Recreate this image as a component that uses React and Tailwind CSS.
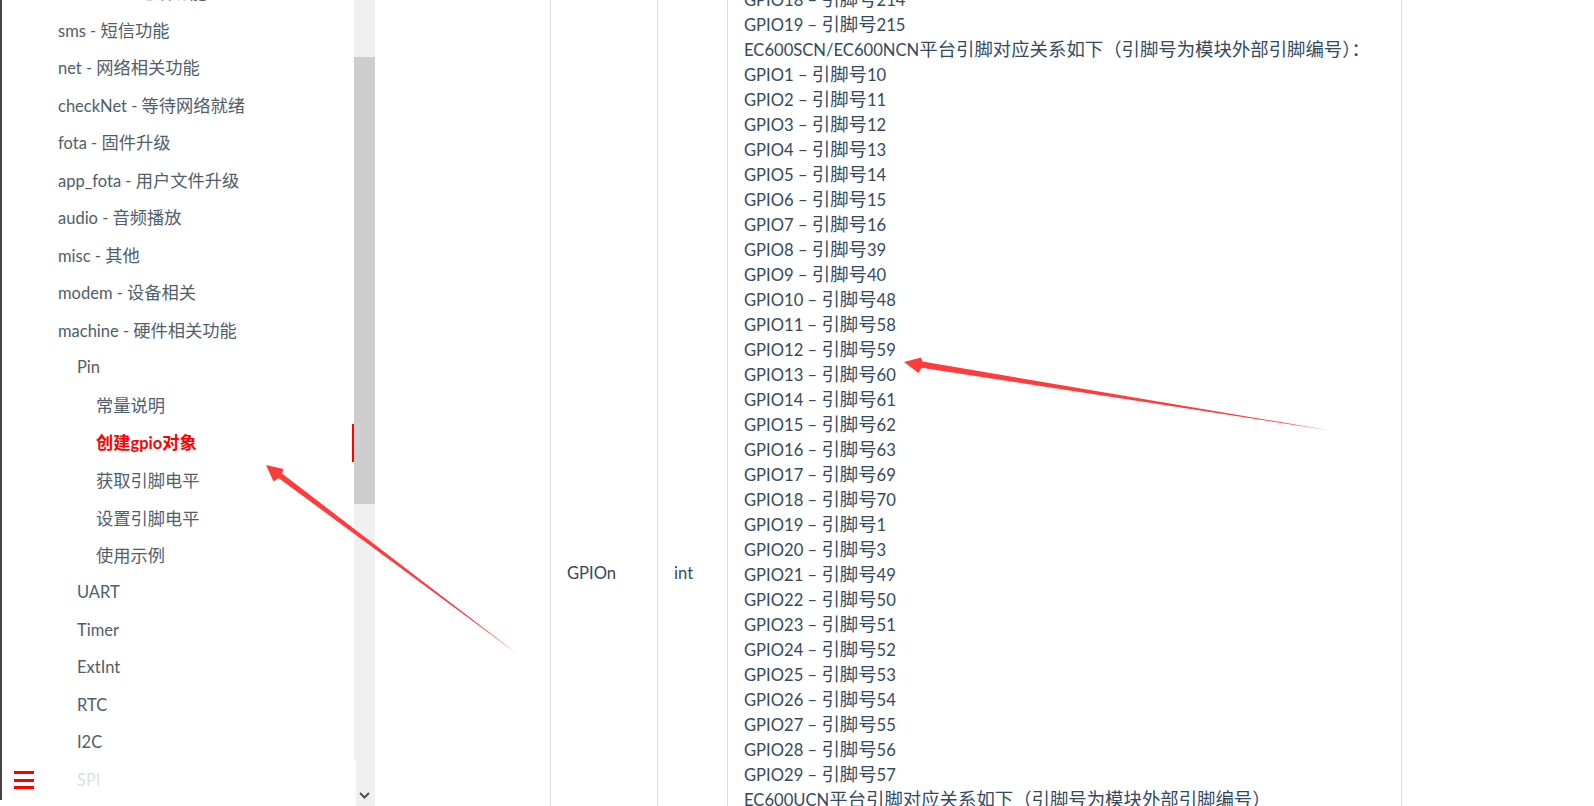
import React from "react";

const CJK_RE = /([\u2E80-\u9FFF\uFF00-\uFFEF\u3000-\u303F]+)/;
const CJK_TEST = /[\u2E80-\u9FFF\uFF00-\uFFEF\u3000-\u303F]/;

function Mixed({ text, latin, cjk }) {
  const parts = text.split(CJK_RE);
  return (
    <span className="whitespace-pre">
      {parts.map((p, i) =>
        p === "" ? null : CJK_TEST.test(p) ? (
          <span key={i} className={cjk}>
            {p}
          </span>
        ) : (
          <span key={i} className={latin}>
            {p}
          </span>
        )
      )}
    </span>
  );
}

const SIDE_LATIN = "font-['Lato','Noto_Sans_CJK_SC',sans-serif] text-[16.5px]";
const SIDE_CJK = "font-['Noto_Sans_CJK_SC',sans-serif] text-[17.25px]";
const BODY_LATIN = "font-['Lato','Noto_Sans_CJK_SC',sans-serif] text-[16.6px]";
const BODY_CJK = "font-['Noto_Sans_CJK_SC',sans-serif] text-[18.4px]";

const levelPad = {
  1: "pl-[56px]",
  2: "pl-[75px]",
  3: "pl-[94px]",
};

const sidebarItems = [
  { t: "voiceCall - 电话功能", l: 1 },
  { t: "sms - 短信功能", l: 1 },
  { t: "net - 网络相关功能", l: 1 },
  { t: "checkNet - 等待网络就绪", l: 1 },
  { t: "fota - 固件升级", l: 1 },
  { t: "app_fota - 用户文件升级", l: 1 },
  { t: "audio - 音频播放", l: 1 },
  { t: "misc - 其他", l: 1 },
  { t: "modem - 设备相关", l: 1 },
  { t: "machine - 硬件相关功能", l: 1 },
  { t: "Pin", l: 2 },
  { t: "常量说明", l: 3 },
  { t: "创建gpio对象", l: 3, active: true },
  { t: "获取引脚电平", l: 3 },
  { t: "设置引脚电平", l: 3 },
  { t: "使用示例", l: 3 },
  { t: "UART", l: 2 },
  { t: "Timer", l: 2 },
  { t: "ExtInt", l: 2 },
  { t: "RTC", l: 2 },
  { t: "I2C", l: 2 },
  { t: "SPI", l: 2 },
];

const pins = [10, 11, 12, 13, 14, 15, 16, 39, 40, 48, 58, 59, 60, 61, 62, 63, 69, 70, 1, 3, 49, 50, 51, 52, 53, 54, 55, 56, 57];

const col3Lines = [
  "GPIO18 – 引脚号214",
  "GPIO19 – 引脚号215",
  "EC600SCN/EC600NCN平台引脚对应关系如下（引脚号为模块外部引脚编号）：",
  ...pins.map((p, i) => `GPIO${i + 1} – 引脚号${p}`),
  "EC600UCN平台引脚对应关系如下（引脚号为模块外部引脚编号）",
  "GPIO1 – 引脚号61",
  "GPIO2 – 引脚号58",
  "GPIO3 – 引脚号34",
];

function Sidebar() {
  return (
    <aside className="w-[352px] h-full overflow-hidden bg-white">
      <ul className="mt-[-26px] flex flex-col">
        {sidebarItems.map((it, i) => (
          <li
            key={i}
            className={`h-[37.5px] flex items-center whitespace-nowrap ${levelPad[it.l]} ${
              it.active ? "border-r-2 border-[#ff0000] text-[#ff0000] font-bold" : "text-[#505d6b]"
            }`}
          >
            <Mixed text={it.t} latin={SIDE_LATIN} cjk={SIDE_CJK} />
          </li>
        ))}
      </ul>
    </aside>
  );
}

function Scrollbar() {
  return (
    <div className="w-[21px] h-full bg-[#f0f0f0] flex flex-col">
      <div className="mt-[57px] h-[447px] bg-[#cdcdcd]" />
      <div className="flex-1" />
      <div className="h-[21px] flex items-center justify-center">
        <svg width="11" height="7" viewBox="0 0 11 7">
          <path d="M1 1 L5.5 5.5 L10 1" fill="none" stroke="#505050" strokeWidth="2" />
        </svg>
      </div>
    </div>
  );
}

function Table() {
  return (
    <div className="flex h-[1189px] mt-[-21.5px] text-[#34495e]">
      <div className="w-[107px] border-l border-[#dddddd] flex items-center px-[16px]">
        <Mixed text="GPIOn" latin={BODY_LATIN} cjk={BODY_CJK} />
      </div>
      <div className="w-[70px] border-l border-[#dddddd] flex items-center px-[16px]">
        <Mixed text="int" latin={BODY_LATIN} cjk={BODY_CJK} />
      </div>
      <div className="w-[675px] border-l border-r border-[#dddddd] pt-[7px] px-[16px] leading-[25px]">
        {col3Lines.map((line, i) => (
          <div key={i} className="h-[25px] whitespace-nowrap">
            <Mixed text={line} latin={BODY_LATIN} cjk={BODY_CJK} />
          </div>
        ))}
      </div>
    </div>
  );
}

function Arrows() {
  return (
    <svg
      className="absolute left-0 top-0 pointer-events-none"
      width="1594"
      height="806"
      viewBox="0 0 1594 806"
    >
      <polygon
        points="266,465 283.5,469 282,473.5 519.5,655.5 278.5,478 273.5,481.5"
        fill="#ff3b3b"
      />
      <polygon
        points="904,362 921,357.5 922.5,361.6 1330,430.5 921.5,367.8 918.5,373"
        fill="#ff3b3b"
      />
    </svg>
  );
}

export default function App() {
  return (
    <div className="relative w-[1594px] h-[806px] overflow-hidden bg-white flex">
      <div className="w-[2px] h-[800px] bg-[#444444] shrink-0" />
      <Sidebar />
      <Scrollbar />
      <main className="flex-1 h-full pl-[175px] overflow-hidden">
        <Table />
      </main>

      <div className="absolute left-[2px] top-[759px] w-[354px] h-[47px] bg-white/80">
        <div className="ml-[12px] mt-[12px] w-[20px] flex flex-col gap-[4.5px]">
          <span className="block h-[3px] bg-[#ff0000]" />
          <span className="block h-[3px] bg-[#ff0000]" />
          <span className="block h-[3px] bg-[#ff0000]" />
        </div>
      </div>

      <Arrows />
    </div>
  );
}
